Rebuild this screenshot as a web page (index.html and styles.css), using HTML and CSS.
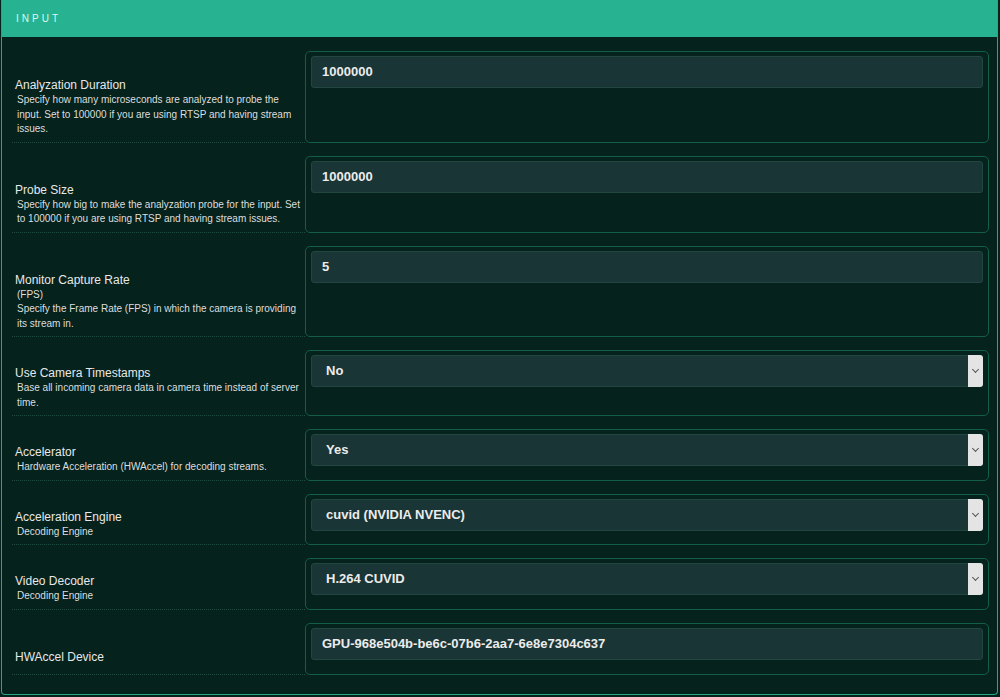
FILE: index.html
```html
<!DOCTYPE html>
<html lang="en">
<head>
  <meta charset="UTF-8" />
  <title>Monitor Settings - Input</title>
  <link rel="stylesheet" href="styles.css">
</head>
<body>
  <div class="panel">
    <div class="panel-head">Input</div>
    <div class="panel-body">

      <div class="row text-row">
        <div class="label-col">
          <div class="title">Analyzation Duration</div>
          <div class="desc">Specify how many microseconds are analyzed to probe the input. Set to 100000 if you are using RTSP and having stream issues.</div>
        </div>
        <div class="field-box">
          <div class="input">1000000</div>
        </div>
      </div>

      <div class="row text-row">
        <div class="label-col">
          <div class="title">Probe Size</div>
          <div class="desc">Specify how big to make the analyzation probe for the input. Set to 100000 if you are using RTSP and having stream issues.</div>
        </div>
        <div class="field-box">
          <div class="input">1000000</div>
        </div>
      </div>

      <div class="row text-row">
        <div class="label-col">
          <div class="title">Monitor Capture Rate</div>
          <div class="desc">(FPS)</div>
          <div class="desc">Specify the Frame Rate (FPS) in which the camera is providing its stream in.</div>
        </div>
        <div class="field-box">
          <div class="input">5</div>
        </div>
      </div>

      <div class="row">
        <div class="label-col">
          <div class="title">Use Camera Timestamps</div>
          <div class="desc">Base all incoming camera data in camera time instead of server time.</div>
        </div>
        <div class="field-box">
          <div class="input select">No<span class="arrow"></span></div>
        </div>
      </div>

      <div class="row">
        <div class="label-col">
          <div class="title">Accelerator</div>
          <div class="desc">Hardware Acceleration (HWAccel) for decoding streams.</div>
        </div>
        <div class="field-box">
          <div class="input select">Yes<span class="arrow"></span></div>
        </div>
      </div>

      <div class="row">
        <div class="label-col">
          <div class="title">Acceleration Engine</div>
          <div class="desc">Decoding Engine</div>
        </div>
        <div class="field-box">
          <div class="input select">cuvid (NVIDIA NVENC)<span class="arrow"></span></div>
        </div>
      </div>

      <div class="row">
        <div class="label-col">
          <div class="title">Video Decoder</div>
          <div class="desc">Decoding Engine</div>
        </div>
        <div class="field-box">
          <div class="input select">H.264 CUVID<span class="arrow"></span></div>
        </div>
      </div>

      <div class="row text-row last">
        <div class="label-col">
          <div class="title">HWAccel Device</div>
        </div>
        <div class="field-box">
          <div class="input">GPU-968e504b-be6c-07b6-2aa7-6e8e7304c637</div>
        </div>
      </div>

    </div>
  </div>
</body>
</html>
```

FILE: styles.css
```css
/* General Styles */
body {
  margin: 0;
  padding: 0;
  background-color: #05221c;
  font-family: "Liberation Sans", Arial, sans-serif;
  color: #e6e6e6;
}

.panel {
  margin: 0 2px 3px 1px;
  border: 1px solid #2aa585;
  border-top: none;
  border-radius: 0 0 4px 4px;
  background-color: #05221c;
}

.panel-head {
  height: 37px;
  line-height: 37px;
  padding-left: 14px;
  background-color: #27b391;
  color: #dff5ef;
  font-size: 10px;
  letter-spacing: 3px;
  text-transform: uppercase;
}

.panel-body {
  padding: 14px 8px 19px 10px;
}

/* Rows */
.row {
  display: flex;
  margin-bottom: 13px;
}

.row.last {
  margin-bottom: 0;
}

.label-col {
  width: 290px;
  display: flex;
  flex-direction: column;
  padding: 15px 0 5px 3px;
  border-bottom: 1px dotted #1f4a3d;
}

.text-row .label-col {
  padding-top: 26px;
}

.row.last .label-col {
  padding-bottom: 9px;
}

.title {
  font-size: 12px;
  line-height: 16px;
  color: #e8e8e8;
}

.desc {
  padding: 0 3px 0 2px;
  font-size: 10px;
  line-height: 14.5px;
  color: #dedede;
}

/* Field Box */
.field-box {
  flex: 1;
  border: 1px solid #135e48;
  border-radius: 5px;
  padding: 4px 5px;
}

.input {
  position: relative;
  height: 30px;
  line-height: 30px;
  padding-left: 10px;
  background-color: #1a3536;
  border: 1px solid #224740;
  border-radius: 3px;
  font-size: 13px;
  font-weight: bold;
  color: #ececec;
}

.input.select {
  padding-left: 14px;
}

.arrow {
  position: absolute;
  right: -1px;
  top: -1px;
  width: 15px;
  height: 32px;
  background-color: #e4e4e4;
  border-radius: 0 3px 3px 0;
}

.arrow::after {
  content: "";
  position: absolute;
  left: 5px;
  top: 12px;
  width: 4px;
  height: 4px;
  border-right: 1px solid #555;
  border-bottom: 1px solid #555;
  transform: rotate(45deg);
}
```
